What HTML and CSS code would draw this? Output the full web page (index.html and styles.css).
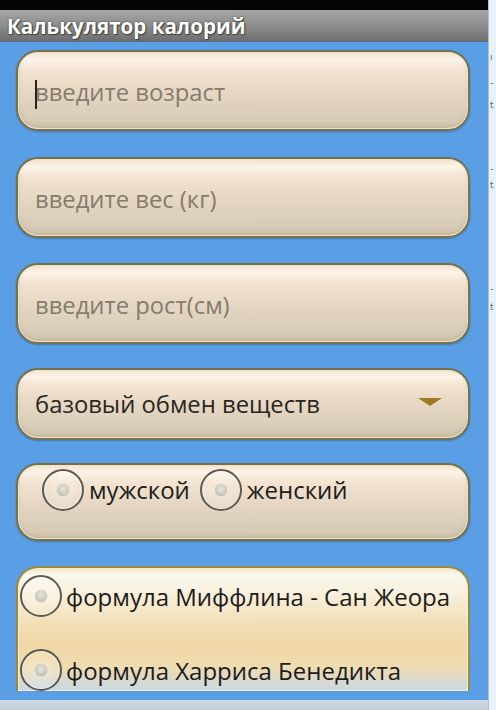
FILE: index.html
```html
<!DOCTYPE html>
<html lang="ru">
<head>
<meta charset="utf-8">
<title>Калькулятор калорий</title>
<link rel="stylesheet" href="styles.css">
</head>
<body>
<div class="screen">
  <div class="phone">
    <div class="statusbar"></div>
    <div class="titlebar"><span class="title">Калькулятор калорий</span></div>
    <div class="content">
      <div class="field"><span class="cursor"></span><span class="placeholder">введите возраст</span></div>
      <div class="field"><span class="placeholder">введите вес (кг)</span></div>
      <div class="field"><span class="placeholder">введите рост(см)</span></div>
      <div class="field spinner"><span class="value">базовый обмен веществ</span><span class="arrow"></span></div>
      <div class="field gender">
        <span class="radio"><span class="dot"></span></span><span class="label">мужской</span>
        <span class="radio radio-second"><span class="dot"></span></span><span class="label">женский</span>
      </div>
      <div class="formulas">
        <div class="option"><span class="radio"><span class="dot"></span></span><span class="label">формула Миффлина - Сан Жеора</span></div>
        <div class="option"><span class="radio"><span class="dot"></span></span><span class="label">формула Харриса Бенедикта</span></div>
      </div>
    </div>
    <div class="bottombar"></div>
  </div>
  <div class="side">
    <span class="frag f1">ı</span>
    <span class="frag f2">-</span>
    <span class="frag f3">t</span>
    <span class="frag f4">-</span>
    <span class="frag f5">t</span>
    <span class="frag f6">-</span>
    <span class="frag f7">t</span>
  </div>
</div>
</body>
</html>
```
FILE: styles.css
```css
html, body {
  margin: 0;
  padding: 0;
  background: #5a9fe5;
}
body {
  width: 496px;
  height: 710px;
  overflow: hidden;
  font-family: "Open Sans", "Noto Sans", "DejaVu Sans", sans-serif;
}
.screen {
  display: flex;
  width: 496px;
  height: 710px;
}
.phone {
  width: 488px;
  display: flex;
  flex-direction: column;
  background: #5a9fe5;
}
.statusbar {
  height: 10px;
  background: #050505;
}
.titlebar {
  height: 32px;
  box-sizing: border-box;
  padding-left: 7px;
  display: flex;
  align-items: center;
  background: linear-gradient(#a6a6a6 0%, #8e8e8e 50%, #6e6e6e 100%);
  border-bottom: 1px solid #5a6a7a;
}
.title {
  color: #fff;
  font-weight: bold;
  font-size: 20.6px;
  line-height: 24px;
  text-shadow: 0 0 2px #333, 1px 1px 1px #444;
}
.content {
  flex: 1;
  display: flex;
  flex-direction: column;
  padding: 8px 18px 0 16px;
  gap: 25px;
  overflow: hidden;
}
.field {
  height: 81px;
  box-sizing: border-box;
  border: 2px solid #727150;
  border-radius: 22px;
  background: linear-gradient(#f4e2cf 0%, #fdf3e8 10%, #f3e3d0 24%, #e4d6c2 55%, #d8ccb7 88%, #d2c6b0 100%);
  box-shadow: inset 0 0 0 1px #f0e4c4, inset 0 -3px 4px rgba(150,130,90,0.25), 0 1px 2px rgba(40,60,80,0.4);
  display: flex;
  align-items: center;
  padding-left: 17px;
  padding-top: 2px;
  position: relative;
  flex-shrink: 0;
}
.content .field:nth-child(2) { margin-top: 1px; }
.placeholder {
  color: #857c6c;
  font-size: 23.8px;
}
.cursor {
  position: absolute;
  left: 17px;
  top: 28px;
  width: 2px;
  height: 29px;
  background: #2a2218;
}
.spinner {
  height: 72px;
  margin-top: -1px;
  justify-content: space-between;
  padding-right: 26px;
  padding-top: 0;
}
.value {
  color: #2a2620;
  font-size: 23.8px;
}
.arrow {
  width: 0;
  height: 0;
  border-left: 12px solid transparent;
  border-right: 12px solid transparent;
  border-top: 8px solid #9c7a22;
  margin-top: -4px;
}
.gender {
  height: 78px;
  margin-top: -2px;
  padding-left: 24px;
  align-items: flex-start;
  padding-top: 4px;
}
.gender .radio {
  margin-right: 5px;
}
.gender .label {
  margin-top: 4px;
}
.radio-second {
  margin-left: 10px;
}
.radio {
  width: 38px;
  height: 38px;
  flex-shrink: 0;
  border: 2px solid #5c5a50;
  border-radius: 50%;
  background: radial-gradient(circle, rgba(255,255,255,0.35) 0%, rgba(255,255,255,0.1) 70%);
  box-shadow: inset 0 0 1px 1px rgba(255,255,255,0.5);
  display: flex;
  align-items: center;
  justify-content: center;
}
.dot {
  width: 12px;
  height: 12px;
  border-radius: 50%;
  background: radial-gradient(circle at 50% 40%, #e6e4dc 0%, #cfcbc0 55%, #aaa698 100%);
  box-shadow: 0 0 1px rgba(0,0,0,0.3);
}
.label {
  color: #1e1c18;
  font-size: 24px;
}
.formulas {
  flex: 1;
  margin-top: 0;
  margin-bottom: 9px;
  box-sizing: border-box;
  border: 2px solid #9a8a3c;
  border-bottom: none;
  border-radius: 22px 22px 0 0;
  background: linear-gradient(#efe6c8 0%, #fcf8ee 6%, #f8efdc 22%, #f2dfb6 45%, #efd7a6 62%, #f0dcb0 80%, #c9d8e4 100%);
  box-shadow: inset 0 0 0 1px #f6ecd0;
  display: flex;
  flex-direction: column;
  padding: 7px 0 0 2px;
  gap: 32px;
}
.option {
  display: flex;
  align-items: center;
  gap: 4px;
}
.bottombar {
  height: 10px;
  background: linear-gradient(#cfd9e4, #c2ccd8);
}
.side {
  width: 8px;
  background: #e9f1f8;
  border-left: 1px solid #a9c0d8;
  box-sizing: border-box;
  position: relative;
  overflow: hidden;
}
.frag {
  position: absolute;
  left: 1px;
  font-size: 9px;
  line-height: 10px;
  color: #606870;
  font-family: "DejaVu Sans", sans-serif;
}
.f1 { top: 52px; }
.f2 { top: 78px; }
.f3 { top: 100px; }
.f4 { top: 164px; }
.f5 { top: 180px; }
.f6 { top: 284px; }
.f7 { top: 302px; }
```
